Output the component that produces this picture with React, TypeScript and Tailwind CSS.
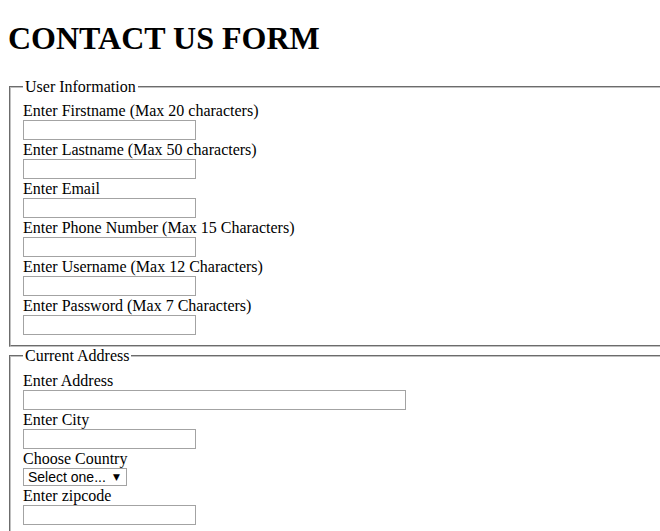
import React from 'react';

const serif = "font-['Liberation_Serif','Times_New_Roman',serif]";

const Field = ({ label, wide }: { label: string; wide?: boolean }) => (
  <div className="flex flex-col items-start">
    <label className="leading-[19px]">{label}</label>
    <input
      type="text"
      className={`${wide ? 'w-[383px]' : 'w-[173px]'} h-[20px] border border-[#a3a3a3] bg-white outline-none`}
    />
  </div>
);

export default function App() {
  return (
    <div className={`${serif} text-[16px] text-black bg-white min-h-[531px] overflow-hidden`}>
      <div className="w-[720px] pl-[8px]">
        <h1 className="text-[32px] font-bold leading-[35px] pt-[21px] pb-[22px]">CONTACT US FORM</h1>

        {/* User information */}
        <fieldset className="ml-px border-2 [border-style:groove] border-[#c0c0c0] pl-[12px] pr-[12px] pt-[5px] pb-[10px]">
          <legend className="px-[2px] leading-[18px]">User Information</legend>
          <Field label="Enter Firstname (Max 20 characters)" />
          <Field label="Enter Lastname (Max 50 characters)" />
          <Field label="Enter Email" />
          <Field label="Enter Phone Number (Max 15 Characters)" />
          <Field label="Enter Username (Max 12 Characters)" />
          <Field label="Enter Password (Max 7 Characters)" />
        </fieldset>

        {/* Address */}
        <fieldset className="ml-px border-2 [border-style:groove] border-[#c0c0c0] pl-[12px] pr-[12px] pt-[6px] pb-[10px]">
          <legend className="px-[2px] leading-[18px]">Current Address</legend>
          <Field label="Enter Address" wide />
          <Field label="Enter City" />
          <div className="flex flex-col items-start">
            <label className="leading-[19px]">Choose Country</label>
            <div
              role="combobox"
              className="flex items-center justify-between w-[104px] h-[18px] border border-[#a3a3a3] bg-white pl-[4px] pr-[6px] text-[14px] leading-[16px] font-['Liberation_Sans',Arial,sans-serif]"
            >
              <span>Select one...</span>
              <span className="text-[9px] font-['DejaVu_Sans',sans-serif]">▼</span>
            </div>
          </div>
          <Field label="Enter zipcode" />
        </fieldset>
      </div>
    </div>
  );
}
